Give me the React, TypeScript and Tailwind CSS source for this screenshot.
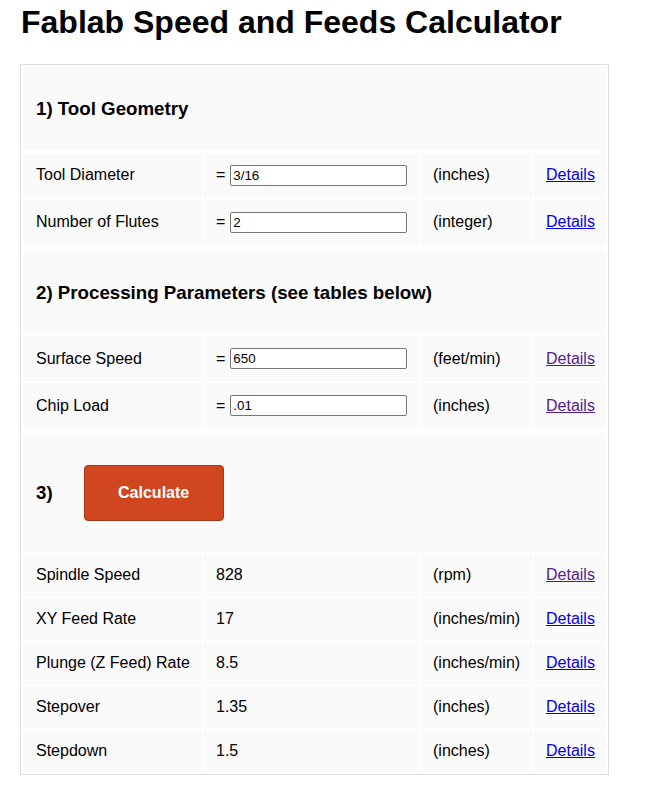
import React from 'react';

type InputRow = { label: string; value: string; unit: string; visited?: boolean };
type ResultRow = { label: string; value: string; unit: string; visited?: boolean };

const geometry: InputRow[] = [
  { label: 'Tool Diameter', value: '3/16', unit: '(inches)' },
  { label: 'Number of Flutes', value: '2', unit: '(integer)' },
];

const processing: InputRow[] = [
  { label: 'Surface Speed', value: '650', unit: '(feet/min)', visited: true },
  { label: 'Chip Load', value: '.01', unit: '(inches)', visited: true },
];

const results: ResultRow[] = [
  { label: 'Spindle Speed', value: '828', unit: '(rpm)', visited: true },
  { label: 'XY Feed Rate', value: '17', unit: '(inches/min)' },
  { label: 'Plunge (Z Feed) Rate', value: '8.5', unit: '(inches/min)' },
  { label: 'Stepover', value: '1.35', unit: '(inches)' },
  { label: 'Stepdown', value: '1.5', unit: '(inches)' },
];

function DetailsLink({ visited }: { visited?: boolean }) {
  return (
    <a
      href="#"
      className={visited ? 'text-[#551a8b] underline' : 'text-[#0000ee] underline'}
    >
      Details
    </a>
  );
}

function Heading({ children }: { children: React.ReactNode }) {
  return (
    <tr>
      <td colSpan={4} className="bg-[#fafafa] px-[13px] py-[31px]">
        <h3 className="text-[18.72px] font-bold leading-[21.5px]">{children}</h3>
      </td>
    </tr>
  );
}

function Spacer() {
  return (
    <tr>
      <td colSpan={4} className="h-[2px] p-0" />
    </tr>
  );
}

function InputLine({ row }: { row: InputRow }) {
  return (
    <tr>
      <td className="bg-[#fafafa] px-[13px] py-[12px]">{row.label}</td>
      <td className="bg-[#fafafa] px-[12px] py-[12px]">
        <div className="flex h-[21px] items-center gap-[5px]">
          <span>=</span>
          <input
            defaultValue={row.value}
            className="h-[21px] w-[177px] rounded-[2px] border border-[#767676] bg-white px-[2px] text-[13.33px] leading-[15px] text-black outline-none"
          />
        </div>
      </td>
      <td className="bg-[#fafafa] px-[12px] py-[12px]">{row.unit}</td>
      <td className="bg-[#fafafa] px-[12px] py-[12px]">
        <DetailsLink visited={row.visited} />
      </td>
    </tr>
  );
}

function ResultLine({ row }: { row: ResultRow }) {
  return (
    <tr>
      <td className="whitespace-nowrap bg-[#fafafa] px-[13px] py-[12px]">{row.label}</td>
      <td className="bg-[#fafafa] px-[12px] py-[12px]">{row.value}</td>
      <td className="whitespace-nowrap bg-[#fafafa] px-[12px] py-[12px]">{row.unit}</td>
      <td className="bg-[#fafafa] px-[12px] py-[12px]">
        <DetailsLink visited={row.visited} />
      </td>
    </tr>
  );
}

export default function App() {
  return (
    <div className="min-h-[810px] bg-white pl-[20px] pt-[4px] font-['Liberation_Sans',Arial,sans-serif] text-[16px] leading-[18px] text-black">
      <h1 className="ml-[1px] text-[32px] font-bold leading-[37px]">Fablab Speed and Feeds Calculator</h1>

      <table className="mt-[23px] w-[589px] table-fixed border-separate border-spacing-[2px] border border-[#dddddd]">
        <colgroup>
          <col className="w-[179px]" />
          <col className="w-[215px]" />
          <col className="w-[111px]" />
          <col className="w-[72px]" />
        </colgroup>
        <tbody>
          <Heading>1) Tool Geometry</Heading>
          {geometry.map((r) => (
            <InputLine key={r.label} row={r} />
          ))}
          <Spacer />
          <Heading>2) Processing Parameters (see tables below)</Heading>
          {processing.map((r) => (
            <InputLine key={r.label} row={r} />
          ))}
          <Spacer />
          <tr>
            <td colSpan={4} className="bg-[#fafafa] px-[13px] py-[31px]">
              <div className="flex items-center">
                <h3 className="text-[18.72px] font-bold leading-[21.5px]">3)</h3>
                <button
                  type="button"
                  className="ml-[31px] h-[56px] w-[140px] rounded-[4px] border border-[#a8381a] bg-[#d0461e] text-[16px] font-bold text-white"
                >
                  Calculate
                </button>
              </div>
            </td>
          </tr>
          {results.map((r) => (
            <ResultLine key={r.label} row={r} />
          ))}
        </tbody>
      </table>
    </div>
  );
}
